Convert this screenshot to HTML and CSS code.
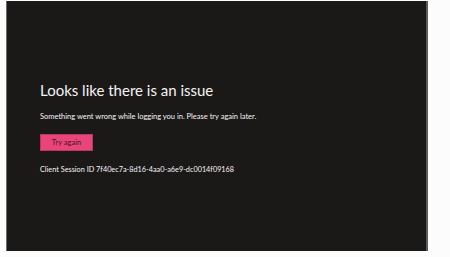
FILE: index.html
```html
<!DOCTYPE html>
<html lang="en">
<head>
  <meta charset="UTF-8" />
  <title>Sign in error</title>
  <link rel="stylesheet" href="styles.css">
</head>
<body>
  <main class="panel">
    <div class="error-box">
      <h1 class="error-title">Looks like there is an issue</h1>
      <p class="error-text">Something went wrong while logging you in. Please try again later.</p>
      <button class="button" type="button">Try again</button>
      <p class="session-id">Client Session ID 7f40ec7a-8d16-4aa0-a6e9-dc0014f09168</p>
    </div>
  </main>
</body>
</html>
```

FILE: styles.css
```css
* {
  padding: 0;
  margin: 0;
  box-sizing: border-box;
  font-family: Lato, "Open Sans", sans-serif;
}

body {
  background: #fcfcfc;
  padding: 1px 0 0 6px;
  height: 257px;
}

.panel {
  width: 422px;
  height: 250px;
  background: #1b1818;
  border-left: 1px solid #6a6a6a;
  border-right: 2px solid #5a5a5a;
  display: flex;
  align-items: center;
}

.error-box {
  padding-left: 33px;
  padding-top: 2px;
  display: flex;
  flex-direction: column;
  align-items: flex-start;
  color: #f4f4f4;
}

.error-title {
  font-size: 15px;
  font-weight: 400;
  line-height: 20px;
}

.error-text {
  font-size: 7.5px;
  line-height: 10px;
  margin-top: 12px;
}

.button {
  margin-top: 12px;
  background: #e8457b;
  color: #4a1428;
  border: 1px solid #b8366a;
  font-family: Lato, sans-serif;
  font-size: 7.5px;
  width: 53px;
  height: 17px;
}

.session-id {
  font-size: 7.3px;
  line-height: 10px;
  margin-top: 14px;
}
```
